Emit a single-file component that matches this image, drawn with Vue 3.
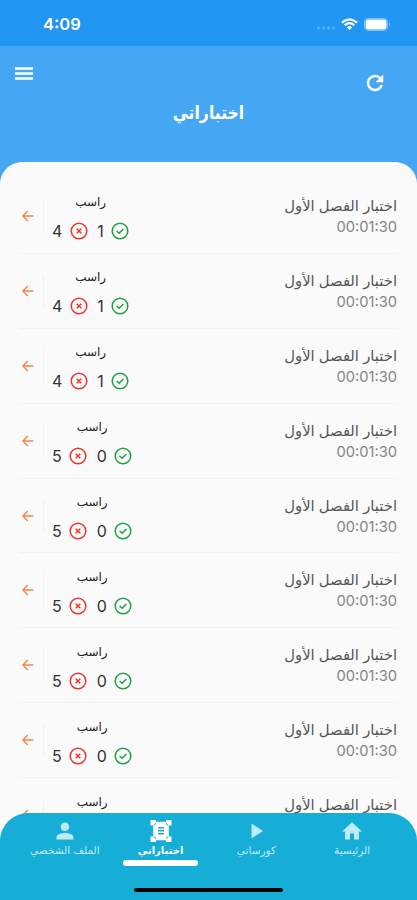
<script setup>
import { ref } from "vue";

const activeTab = ref("exams");

const exams = ref([
  { id: 1, passed: 1, failed: 4 },
  { id: 2, passed: 1, failed: 4 },
  { id: 3, passed: 1, failed: 4 },
  { id: 4, passed: 0, failed: 5 },
  { id: 5, passed: 0, failed: 5 },
  { id: 6, passed: 0, failed: 5 },
  { id: 7, passed: 0, failed: 5 },
  { id: 8, passed: 0, failed: 5 },
  { id: 9, passed: 0, failed: 5 },
]);

const tabs = [
  { key: "profile", label: "الملف الشخصي" },
  { key: "exams", label: "اختباراتي" },
  { key: "courses", label: "كورساتي" },
  { key: "home", label: "الرئيسية" },
];
</script>

<template>
  <div class="phone">
    <div class="status-bar">
      <span class="clock">4:09</span>
      <div class="status-icons">
        <svg class="dots" width="20" height="4" viewBox="0 0 20 4">
          <circle cx="2.5" cy="2" r="1.4" />
          <circle cx="7.5" cy="2" r="1.4" />
          <circle cx="12.5" cy="2" r="1.4" />
          <circle cx="17.5" cy="2" r="1.4" />
        </svg>
        <svg class="wifi" width="17" height="13" viewBox="0 0 17 13">
          <path d="M1 4.6 Q8.5 -2 16 4.6" />
          <path d="M3.7 7.3 Q8.5 3 13.3 7.3" />
          <path class="solid" d="M5.9 9.2 Q8.5 7 11.1 9.2 L8.5 12.3Z" />
        </svg>
        <svg class="battery" width="27" height="13" viewBox="0 0 27 13">
          <rect class="case" x="0.5" y="0.5" width="23" height="12" rx="3.4" />
          <rect class="charge" x="1.5" y="1.5" width="21" height="10" rx="2.4" />
          <path class="tip" d="M25 4.3 Q27 6.5 25 8.7Z" />
        </svg>
      </div>
    </div>

    <header class="header">
      <div class="toolbar">
        <button class="menu" aria-label="القائمة">
          <svg width="18" height="14" viewBox="0 0 18 14">
            <path d="M0 1.5H18M0 6.5H18M0 11.5H18" />
          </svg>
        </button>
        <button class="refresh" aria-label="تحديث">
          <svg width="24" height="24" viewBox="0 0 24 24">
            <path
              d="M17.65 6.35A7.96 7.96 0 0 0 12 4a8 8 0 1 0 7.73 10h-2.08A6 6 0 1 1 12 6c1.66 0 3.14.69 4.22 1.78L13 11h7V4z"
            />
          </svg>
        </button>
      </div>
      <h1 class="title" dir="rtl">اختباراتي</h1>
    </header>

    <main class="sheet">
      <div v-for="exam in exams" :key="exam.id" class="exam">
        <svg class="arrow" width="12" height="12" viewBox="0 0 12 12">
          <path d="M11.5 6H1M5.8 1L0.9 6L5.8 11" />
        </svg>
        <div class="separator"></div>
        <div class="result">
          <span class="status" dir="rtl">راسب</span>
          <div class="scores">
            <span class="count">{{ exam.failed }}</span>
            <svg class="wrong" width="18" height="18" viewBox="0 0 18 18">
              <circle cx="9" cy="9" r="7.8" />
              <path d="M6.7 6.7L11.3 11.3M11.3 6.7L6.7 11.3" />
            </svg>
            <span class="count second">{{ exam.passed }}</span>
            <svg class="right" width="18" height="18" viewBox="0 0 18 18">
              <circle cx="9" cy="9" r="7.8" />
              <path d="M5.6 9L8.1 11.3L12.4 7" />
            </svg>
          </div>
        </div>
        <div class="info">
          <span class="name" dir="rtl">اختبار الفصل الأول</span>
          <span class="time">00:01:30</span>
        </div>
      </div>
    </main>

    <nav class="nav">
      <div class="tabs">
        <button
          v-for="tab in tabs"
          :key="tab.key"
          class="tab"
          :class="[tab.key, { active: activeTab === tab.key }]"
          @click="activeTab = tab.key"
        >
          <svg width="24" height="24" viewBox="0 0 24 24">
            <path
              v-if="tab.key === 'profile'"
              d="M12 12a4.3 4.3 0 1 0 0-8.6 4.3 4.3 0 0 0 0 8.6zM12 14c-3 0-8.5 1.2-8.5 4.3V20.5h17V18.3C20.5 15.2 15 14 12 14z"
            />
            <template v-else-if="tab.key === 'exams'">
              <path d="M1.5 1H7V2.8H17V1H22.5V6.5H19.8V17.5H22.5V23H17V21.2H7V23H1.5V17.5H4.2V6.5H1.5Z" />
              <path
                class="cutout"
                d="M4.2 6.5L7 3.7V5L5.5 6.5ZM19.8 6.5L17 3.7V5L18.5 6.500ZM4.2 17.5L7 20.3V19L5.500 17.5ZM19.8 17.5L17 20.300V19L18.500 17.5Z"
              />
              <path class="lines" d="M9 8.8H15M9 11.6H15M9 14.8H15" />
            </template>
            <path v-else-if="tab.key === 'courses'" d="M7.5 4.5V19.5L19 12Z" />
            <path v-else d="M10 20.5v-6h4v6h5v-8h3L12 3.2 2 12.5h3v8z" />
          </svg>
          <span class="label" dir="rtl">{{ tab.label }}</span>
          <span class="underline"></span>
        </button>
      </div>
      <div class="home-indicator"></div>
    </nav>
  </div>
</template>

<style>
body {
  margin: 0;
  overflow: hidden;
}
</style>

<style scoped>
.phone {
  display: flex;
  flex-direction: column;
  position: relative;
  width: 417px;
  height: 900px;
  overflow: hidden;
  background: #45a7f4;
  font-family: Inter, "DejaVu Sans", sans-serif;
}

button {
  padding: 0;
  border: 0;
  background: none;
  font-family: inherit;
}

svg {
  display: block;
  flex: none;
}

.status-bar {
  flex: none;
  display: flex;
  justify-content: space-between;
  align-items: center;
  box-sizing: border-box;
  height: 46px;
  padding: 2px 26px 0 43px;
  background: #2196f3;
  color: #fff;
}

.clock {
  font-size: 16.5px;
  font-weight: 600;
}

.status-icons {
  display: flex;
  align-items: center;
}

.dots {
  margin: 7px 5px 0 0;
  fill: #62b4f7;
}

.wifi {
  margin-right: 6px;
  fill: none;
  stroke: #fff;
  stroke-width: 2.2;
}

.wifi .solid {
  fill: #fff;
  stroke: none;
}

.battery .case {
  fill: none;
  stroke: #7cc1f9;
}

.battery .charge {
  fill: #fff;
}

.battery .tip {
  fill: #8fcbfa;
}

.header {
  flex: none;
  height: 116px;
  color: #fff;
}

.toolbar {
  display: flex;
  justify-content: space-between;
  align-items: flex-start;
  height: 54px;
  padding: 0 30px 0 15px;
}

.menu {
  padding-top: 21px;
}

.menu path {
  fill: none;
  stroke: #fff;
  stroke-width: 2.6;
}

.refresh {
  padding-top: 25px;
}

.refresh path {
  fill: #fff;
  stroke: #fff;
  stroke-width: 0.5;
}

.title {
  margin: 0;
  font-size: 18px;
  line-height: 26px;
  font-weight: 700;
  text-align: center;
  transform: scaleX(0.87);
}

.sheet {
  flex: 1;
  min-height: 0;
  overflow: hidden;
  box-sizing: border-box;
  padding: 17px 19px 0;
  border-radius: 22px 22px 0 0;
  background: #fafafa;
}

.exam {
  display: flex;
  align-items: center;
  box-sizing: border-box;
  height: 74.9px;
  padding: 0 1px 0 3px;
  border-bottom: 1px solid #f3f3f3;
}

.arrow {
  fill: none;
  stroke: #f58545;
  stroke-width: 1.4;
}

.separator {
  width: 1px;
  height: 32px;
  margin-left: 9px;
  background: #efefef;
}

.result {
  margin-left: 8px;
  padding-top: 2px;
  display: flex;
  flex-direction: column;
  align-items: center;
}

.status {
  color: #222;
  font-size: 12px;
  line-height: 20px;
}

.scores {
  display: flex;
  align-items: center;
  height: 20px;
  margin-top: 9px;
}

.count {
  color: #333;
  font-size: 16px;
}

.count.second {
  margin-left: 9.5px;
}

.wrong,
.right {
  margin-left: 7.5px;
  fill: none;
  stroke-width: 1.5;
}

.wrong {
  stroke: #e8372f;
}

.right {
  stroke: #1fa045;
}

.info {
  margin-left: auto;
  display: flex;
  flex-direction: column;
  align-items: flex-end;
}

.name {
  color: #555;
  font-size: 14.8px;
  line-height: 22px;
}

.time {
  color: #858585;
  font-size: 14.7px;
  line-height: 20px;
}

.nav {
  position: absolute;
  left: 0;
  right: 0;
  bottom: 0;
  box-sizing: border-box;
  height: 87px;
  padding: 6px 17px 0;
  border-radius: 28px 28px 0 0;
  background: #16add6;
}

.tabs {
  display: flex;
}

.tab {
  flex: 1;
  display: flex;
  flex-direction: column;
  align-items: center;
  color: #bdebf7;
}

.tab svg {
  width: 24px;
  height: 24px;
  fill: currentColor;
}

.tab .cutout {
  fill: #16add6;
}

.tab .lines {
  stroke: #16add6;
  stroke-width: 1.6;
}

.label {
  height: 16px;
  font-size: 10.5px;
  line-height: 15px;
  white-space: nowrap;
}

.underline {
  width: 75px;
  height: 6px;
  margin-top: 1px;
  border-radius: 3px;
}

.active {
  color: #fff;
}

.active .label {
  font-size: 10px;
  font-weight: 700;
}

.active .underline {
  background: #fff;
}

.home-indicator {
  width: 149px;
  height: 4px;
  margin: 22px auto 0;
  border-radius: 2px;
  background: #050505;
}
</style>
